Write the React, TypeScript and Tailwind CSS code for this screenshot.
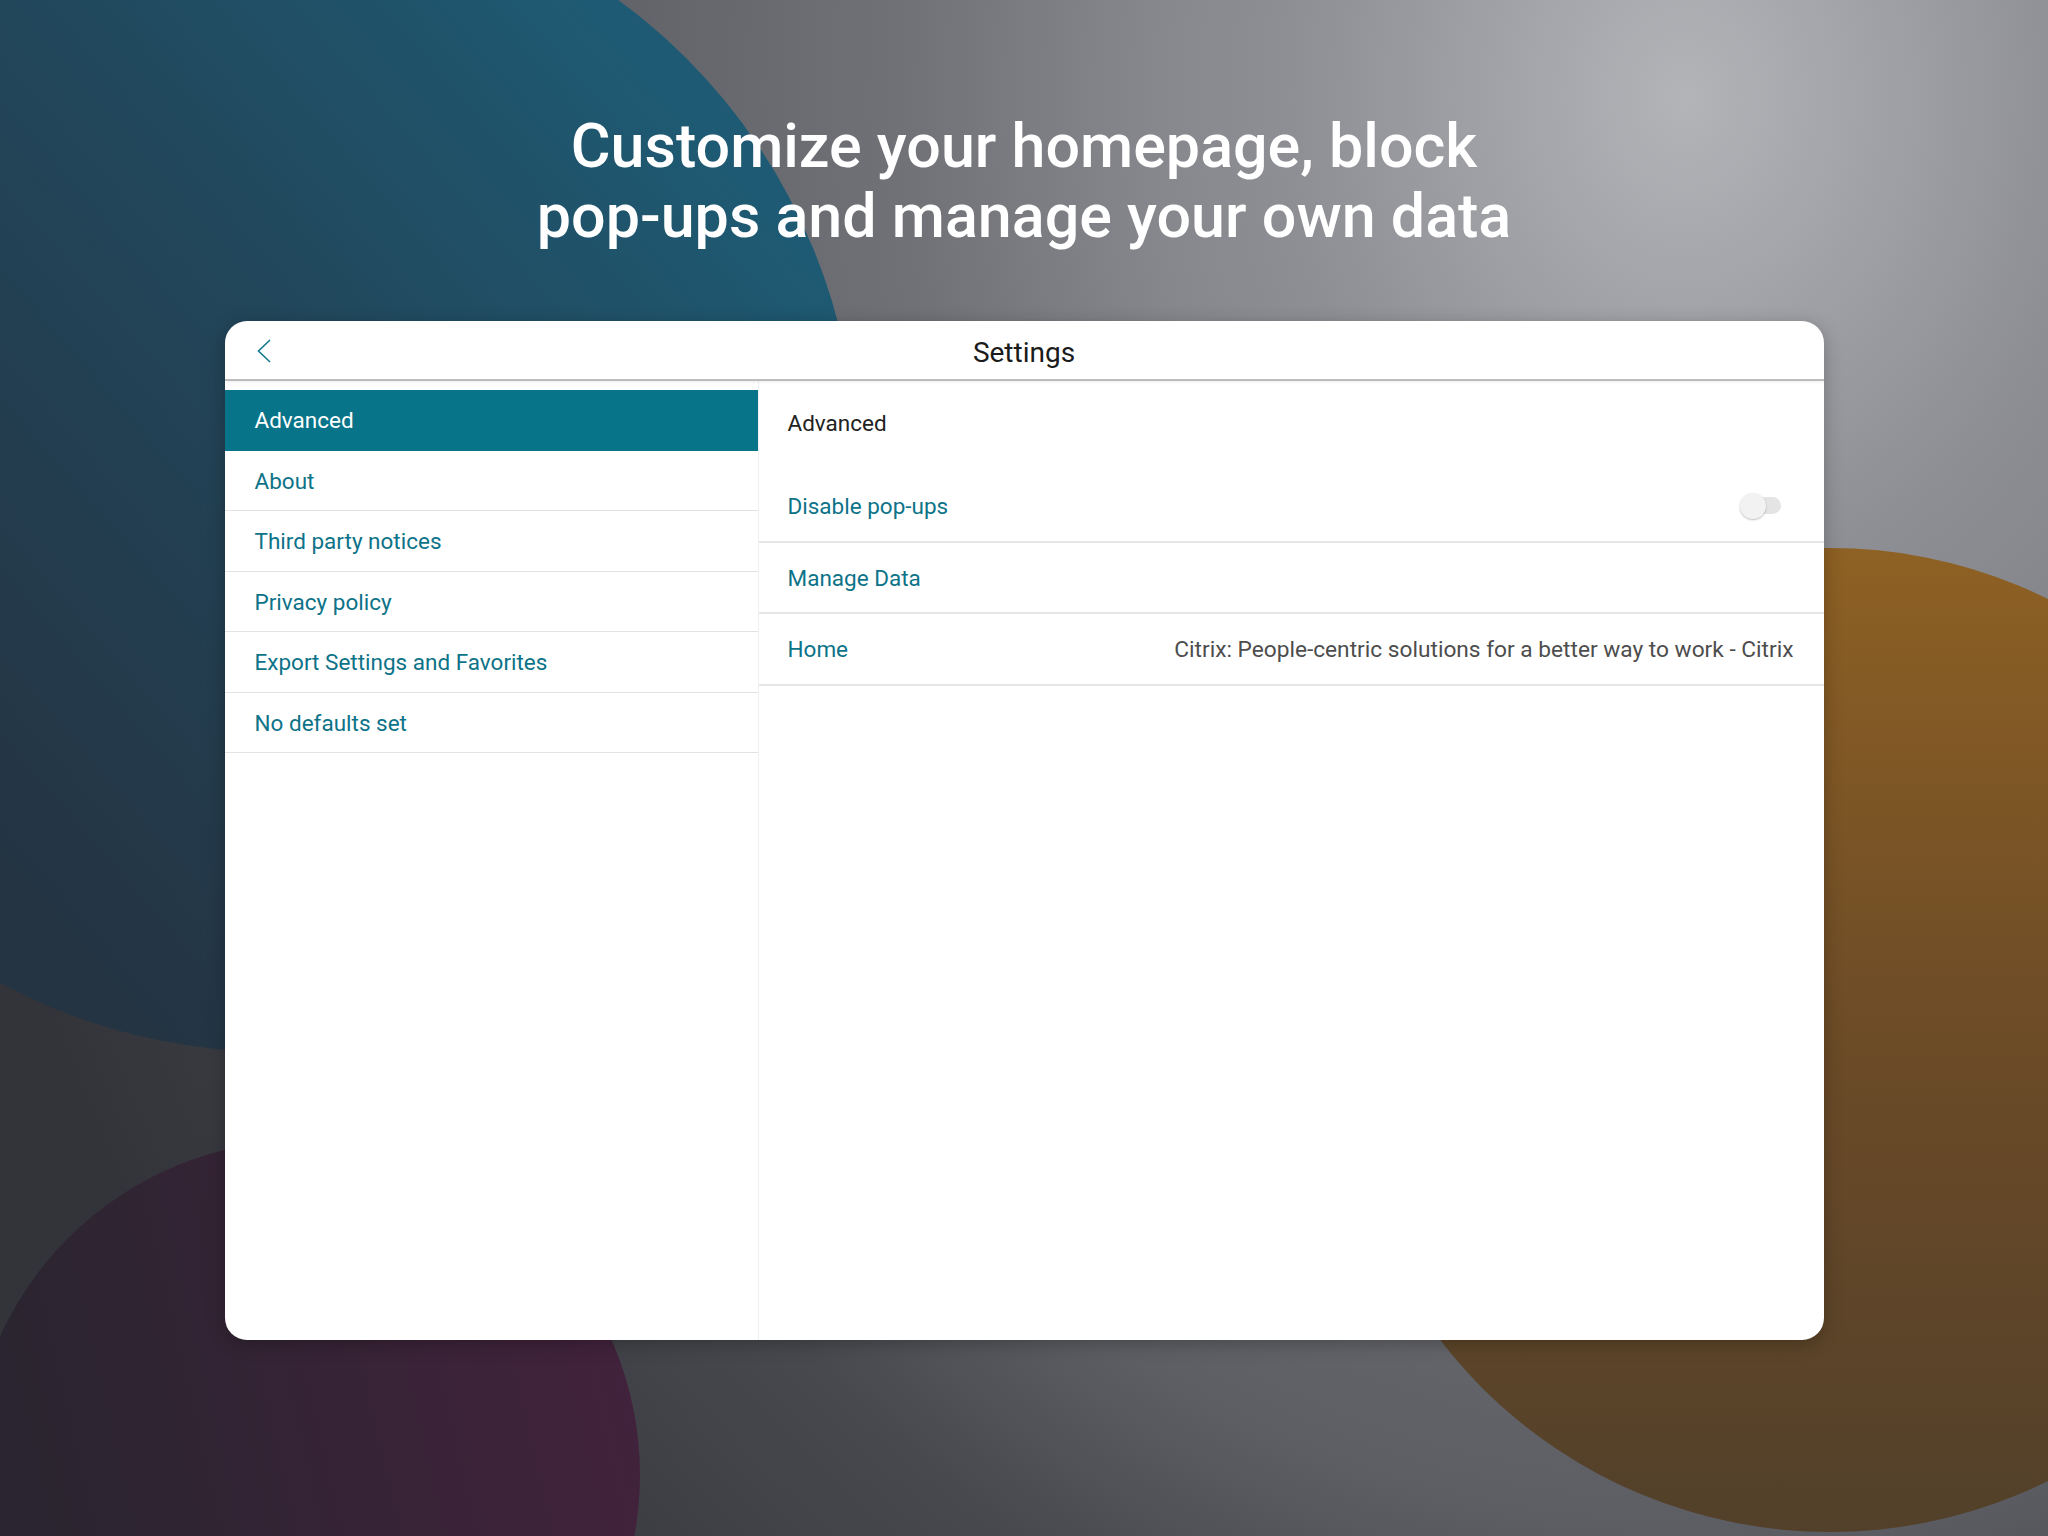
import React from "react";

const sideItems = ["Advanced", "About", "Third party notices", "Privacy policy", "Export Settings and Favorites", "No defaults set"];

const Backdrop = () => (
  <svg className="absolute inset-0" width="2048" height="1536" viewBox="0 0 2048 1536">
    <defs>
      <linearGradient id="teal" x1="800" y1="240" x2="40" y2="900" gradientUnits="userSpaceOnUse">
        <stop offset="0" stopColor="#1e5a73" />
        <stop offset="0.45" stopColor="#22465a" />
        <stop offset="1" stopColor="#243443" />
      </linearGradient>
      <linearGradient id="plum" x1="640" y1="1380" x2="40" y2="1520" gradientUnits="userSpaceOnUse">
        <stop offset="0" stopColor="#42223c" />
        <stop offset="1" stopColor="#2a2530" />
      </linearGradient>
      <linearGradient id="amber" x1="1830" y1="548" x2="1830" y2="1532" gradientUnits="userSpaceOnUse">
        <stop offset="0" stopColor="#8e6124" />
        <stop offset="0.5" stopColor="#6c4b27" />
        <stop offset="1" stopColor="#52402a" />
      </linearGradient>
    </defs>
    <circle cx="275" cy="470" r="582" fill="url(#teal)" />
    <circle cx="305" cy="1475" r="335" fill="url(#plum)" />
    <circle cx="1830" cy="1040" r="492" fill="url(#amber)" />
  </svg>
);

const Toggle = () => (
  <div className="relative w-[41px] h-[26px] mr-[43px]">
    <div className="absolute right-0 top-[4.5px] w-[36px] h-[17px] rounded-full bg-[#e4e4e4]" />
    <div className="absolute left-0 top-0 w-[26px] h-[26px] rounded-full bg-[#f2f2f2] shadow-[0_1px_2px_rgba(0,0,0,0.25)]" />
  </div>
);

export default function App() {
  return (
    <div
      className="relative w-[2048px] h-[1536px] overflow-hidden bg-[radial-gradient(ellipse_1800px_2200px_at_1685px_98px,#b3b4b8_0%,#8e8f94_22%,#86878c_30%,#717277_43%,#5c5e63_65%,#47494e_75%,#33333a_100%)]"
      style={{ fontFamily: "Roboto, 'Noto Sans', sans-serif" }}
    >
      <Backdrop />
      <div className="relative flex flex-col items-center pt-[111px]">
        <h1 className="text-[61px] leading-[70px] font-medium text-white text-center">
          Customize your homepage, block
          <br />
          pop-ups and manage your own data
        </h1>

        <div className="mt-[70px] w-[1599px] h-[1019px] bg-white rounded-[22px] overflow-hidden flex flex-col shadow-[0_4px_18px_rgba(0,0,0,0.25)]">
          <div className="relative z-10 h-[60px] shrink-0 grid grid-cols-[1fr_auto_1fr] items-center border-b-2 border-[#bdbdbd] shadow-[0_1px_3px_rgba(0,0,0,0.08)]">
            <div className="pl-[32px] pt-[2px] flex items-center">
              <svg width="14" height="24" viewBox="0 0 14 24">
                <polyline points="13,1 1.5,12 13,23" fill="none" stroke="#167a8e" strokeWidth="1.6" />
              </svg>
            </div>
            <div className="pt-[5px] text-[28px] text-[#1b1b1b]">Settings</div>
            <div />
          </div>

          <div className="flex flex-1">
            <div className="w-[533px] shrink-0 pt-[9px]">
              {sideItems.map((item, i) =>
                i === 0 ? (
                  <div key={item} className="h-[60.5px] flex items-center pl-[30px] pt-[2px] bg-[#077489] text-white text-[22.5px]">
                    {item}
                  </div>
                ) : (
                  <div key={item} className="h-[60.5px] flex items-center pl-[30px] pt-[3px] border-b border-[#e3e3e3] text-[#0d7388] text-[22.5px]">
                    {item}
                  </div>
                )
              )}
            </div>

            <div className="flex-1 border-l border-[#f0f0f0]">
              <div className="h-[90px] pt-[30px] pl-[29px] text-[22.5px] leading-[24px] text-[#222222]">Advanced</div>
              <div className="h-[71.5px] flex items-center justify-between pl-[29px] border-b-2 border-[#e6e6e6]">
                <span className="pt-[3px] text-[22.5px] text-[#0d7388]">Disable pop-ups</span>
                <Toggle />
              </div>
              <div className="h-[71.5px] flex items-center pl-[29px] border-b-2 border-[#e6e6e6]">
                <span className="pt-[3px] text-[22.5px] text-[#0d7388]">Manage Data</span>
              </div>
              <div className="h-[71.5px] flex items-center justify-between pl-[29px] pr-[30px] border-b-2 border-[#e6e6e6]">
                <span className="pt-[3px] text-[22.5px] text-[#0d7388]">Home</span>
                <span className="pt-[3px] text-[22.7px] text-[#4d4d4d]">Citrix: People-centric solutions for a better way to work - Citrix</span>
              </div>
            </div>
          </div>
        </div>
      </div>
    </div>
  );
}
